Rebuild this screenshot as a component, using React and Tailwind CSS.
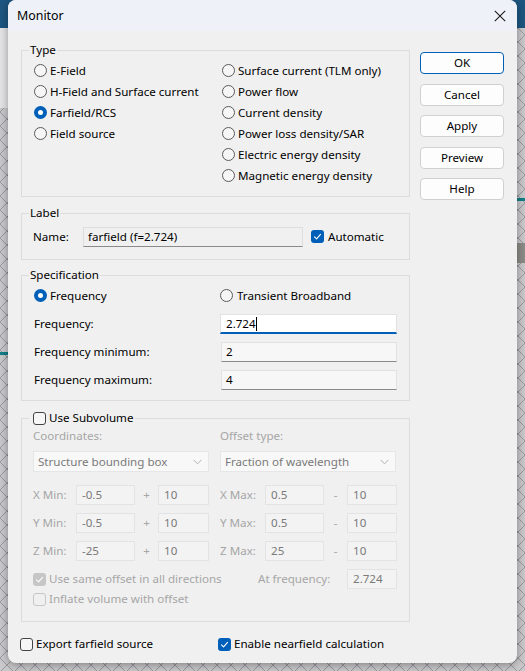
import React from 'react';

const font = { fontFamily: '"Noto Sans", "Open Sans", sans-serif' };

// radio button circle
function Radio({ checked }) {
  return checked ? (
    <span className="w-[13px] h-[13px] rounded-full bg-[#005fb8] flex items-center justify-center shrink-0">
      <span className="w-[5px] h-[5px] rounded-full bg-white" />
    </span>
  ) : (
    <span className="w-[13px] h-[13px] rounded-full border border-[#5a5a5a] bg-[#f6f6f6] shrink-0" />
  );
}

function Check({ checked, disabled }) {
  if (checked) {
    return (
      <span className={`w-[13px] h-[13px] rounded-[3px] flex items-center justify-center shrink-0 ${disabled ? 'bg-[#c6c6c6]' : 'bg-[#005fb8]'}`}>
        <svg width="9" height="9" viewBox="0 0 9 9" fill="none">
          <path d="M1.5 4.8 L3.6 6.8 L7.5 2.4" stroke="white" strokeWidth="1.1" strokeLinecap="round" strokeLinejoin="round" />
        </svg>
      </span>
    );
  }
  return (
    <span className={`w-[13px] h-[13px] rounded-[3px] border shrink-0 ${disabled ? 'border-[#c6c6c6]' : 'border-[#444] bg-[#f6f6f6]'}`} />
  );
}

function RadioItem({ checked, label }) {
  return (
    <div className="h-[21px] flex items-center gap-[3px]">
      <Radio checked={checked} />
      <span>{label}</span>
    </div>
  );
}

function Button({ children, primary }) {
  return (
    <button
      className={`h-[22px] w-[84px] rounded-[4px] bg-[#fdfdfd] text-[11.6px] text-black flex items-center justify-center ${
        primary ? 'border border-[#005fb8]' : 'border border-[#d0d0d0]'
      }`}
    >
      {children}
    </button>
  );
}

function DisInput({ value, w }) {
  return (
    <div className={`h-[20px] ${w} border border-[#e3e3e3] bg-[#f3f3f3] text-[#7a7a7a] px-[5px] flex items-center`}>
      {value}
    </div>
  );
}

function DisSelect({ value }) {
  return (
    <div className="h-[21px] w-[176px] border border-[#e6e6e6] bg-[#f8f8f8] text-[#7a7a7a] pl-[4px] pr-[6px] flex items-center justify-between">
      <span>{value}</span>
      <svg width="9" height="6" viewBox="0 0 9 6" fill="none">
        <path d="M0.5 0.8 L4.5 4.8 L8.5 0.8" stroke="#b0b0b0" strokeWidth="1" />
      </svg>
    </div>
  );
}

function CoordRow({ axis, min, max }) {
  return (
    <div className="h-[20px] flex items-center">
      <span className="w-[43px] text-[#a6a6a6]">{axis} Min:</span>
      <DisInput value={min} w="w-[59px]" />
      <span className="w-[23px] text-center text-[#a6a6a6]">+</span>
      <DisInput value="10" w="w-[51px]" />
      <span className="w-[11px]" />
      <span className="w-[45px] text-[#a6a6a6]">{axis} Max:</span>
      <DisInput value={max} w="w-[59px]" />
      <span className="w-[23px] text-center text-[#a6a6a6]">-</span>
      <DisInput value="10" w="w-[50px]" />
    </div>
  );
}

function Backdrop() {
  return (
    <svg className="absolute inset-0" width="525" height="671">
      <defs>
        <pattern id="mesh" width="14" height="14" patternUnits="userSpaceOnUse">
          <rect width="14" height="14" fill="#c9c9cc" />
          <path d="M0 0 L14 14 M14 0 L0 14" stroke="#8c8c90" strokeWidth="0.8" />
        </pattern>
      </defs>
      <rect width="525" height="671" fill="url(#mesh)" />
      <rect x="0" y="0" width="525" height="28" fill="#1d5680" />
      <rect x="0" y="28" width="10" height="80" fill="#e4e4e6" />
      <rect x="0" y="352" width="10" height="3" fill="#127f86" />
      <rect x="517" y="198" width="8" height="3" fill="#127f86" />
      <rect x="517" y="243" width="8" height="20" fill="#8a8a86" />
    </svg>
  );
}

export default function App() {
  return (
    <div className="relative w-[525px] h-[671px] overflow-hidden text-[11.6px] leading-[16px] text-black" style={font}>
      <Backdrop />

      {/* dialog window */}
      <div className="absolute left-[8px] top-0 w-[509px] h-[663px] rounded-[8px] bg-[#f0f0f0] shadow-[0_2px_8px_rgba(0,0,0,0.35)] overflow-hidden flex flex-col">
        {/* title bar */}
        <div className="h-[31px] bg-[#eef2f8] flex items-center justify-between pl-[9px] pr-[11px] shrink-0">
          <span className="text-[12.4px] pt-[1px]">Monitor</span>
          <svg width="12" height="12" viewBox="0 0 12 12" fill="none">
            <path d="M0.8 0.8 L11.2 11.2 M11.2 0.8 L0.8 11.2" stroke="#1a1a1a" strokeWidth="1.1" />
          </svg>
        </div>

        <div className="flex pl-[13px] pt-[11px] gap-[10px]">
          {/* left column */}
          <div className="w-[389px] flex flex-col">
            {/* Type */}
            <fieldset className="border border-[#dcdcdc] px-[7px] pb-[10px]">
              <legend className="px-[1px]">Type</legend>
              <div className="pl-[5px] pt-[2px] grid grid-cols-[188px_1fr]">
                <div>
                  <RadioItem label="E-Field" />
                  <RadioItem label="H-Field and Surface current" />
                  <RadioItem checked label="Farfield/RCS" />
                  <RadioItem label="Field source" />
                </div>
                <div>
                  <RadioItem label="Surface current (TLM only)" />
                  <RadioItem label="Power flow" />
                  <RadioItem label="Current density" />
                  <RadioItem label="Power loss density/SAR" />
                  <RadioItem label="Electric energy density" />
                  <RadioItem label="Magnetic energy density" />
                </div>
              </div>
            </fieldset>

            {/* Label */}
            <fieldset className="mt-[8px] border border-[#dcdcdc] px-[7px] pb-[12px]">
              <legend className="px-[1px]">Label</legend>
              <div className="pl-[4px] pt-[5px] h-[26px] flex items-center">
                <span className="w-[50px]">Name:</span>
                <div className="h-[20px] w-[220px] border border-[#dedede] border-b-[#8a8a8a] bg-[#f0f0f0] px-[4px] flex items-center">
                  farfield (f=2.724)
                </div>
                <span className="ml-[8px] flex items-center gap-[4px]">
                  <Check checked />
                  Automatic
                </span>
              </div>
            </fieldset>

            {/* Specification */}
            <fieldset className="mt-[7px] border border-[#dcdcdc] px-[7px] pb-[10px]">
              <legend className="px-[1px]">Specification</legend>
              <div className="pl-[5px] pt-[2px] flex flex-col">
                <div className="grid grid-cols-[186px_1fr]">
                  <RadioItem checked label="Frequency" />
                  <div className="h-[21px] flex items-center gap-[4px]">
                    <Radio />
                    <span>Transient Broadband</span>
                  </div>
                </div>
                <div className="mt-[8px] h-[20px] grid grid-cols-[186px_1fr] items-center">
                  <span>Frequency:</span>
                  <div className="h-[20px] w-[177px] bg-white border border-[#e2e2e2] border-b-2 border-b-[#005fb8] px-[5px] flex items-center">
                    2.724<span className="w-[1px] h-[14px] bg-black" />
                  </div>
                </div>
                <div className="mt-[8px] h-[20px] grid grid-cols-[186px_1fr] items-center">
                  <span>Frequency minimum:</span>
                  <div className="ml-[1px] h-[20px] w-[176px] bg-[#f7f7f7] border border-[#e2e2e2] border-b-[#8a8a8a] px-[4px] flex items-center">2</div>
                </div>
                <div className="mt-[8px] h-[20px] grid grid-cols-[186px_1fr] items-center">
                  <span>Frequency maximum:</span>
                  <div className="ml-[1px] h-[20px] w-[176px] bg-[#f7f7f7] border border-[#e2e2e2] border-b-[#8a8a8a] px-[4px] flex items-center">4</div>
                </div>
              </div>
            </fieldset>

            {/* Subvolume */}
            <fieldset className="mt-[9px] border border-[#dcdcdc] px-[7px] pb-[14px]">
              <legend className="pl-[4px] pr-[2px] flex items-center gap-[3px]">
                <Check />
                Use Subvolume
              </legend>
              <div className="pl-[4px] pt-[2px] flex flex-col text-[#a6a6a6]">
                <div className="flex">
                  <span className="w-[187px]">Coordinates:</span>
                  <span>Offset type:</span>
                </div>
                <div className="mt-[7px] flex">
                  <div className="w-[187px]">
                    <DisSelect value="Structure bounding box" />
                  </div>
                  <DisSelect value="Fraction of wavelength" />
                </div>
                <div className="mt-[13px] flex flex-col gap-[8px]">
                  <CoordRow axis="X" min="-0.5" max="0.5" />
                  <CoordRow axis="Y" min="-0.5" max="0.5" />
                  <CoordRow axis="Z" min="-25" max="25" />
                </div>
                <div className="mt-[8px] h-[20px] flex items-center">
                  <span className="w-[225px] flex items-center gap-[3px]">
                    <Check checked disabled />
                    Use same offset in all directions
                  </span>
                  <span className="w-[89px]">At frequency:</span>
                  <DisInput value="2.724" w="w-[50px]" />
                </div>
                <div className="mt-[2px] h-[16px] flex items-center gap-[3px]">
                  <Check disabled />
                  Inflate volume with offset
                </div>
              </div>
            </fieldset>

            <div className="mt-[14px] h-[16px] flex items-center -ml-[1px]">
              <span className="w-[198px] flex items-center gap-[3px]">
                <Check />
                Export farfield source
              </span>
              <span className="flex items-center gap-[3px]">
                <Check checked />
                Enable nearfield calculation
              </span>
            </div>
          </div>

          {/* buttons */}
          <div className="pt-[10px] flex flex-col gap-[9.5px]">
            <Button primary>OK</Button>
            <Button>Cancel</Button>
            <Button>Apply</Button>
            <Button>Preview</Button>
            <Button>Help</Button>
          </div>
        </div>
      </div>
    </div>
  );
}
